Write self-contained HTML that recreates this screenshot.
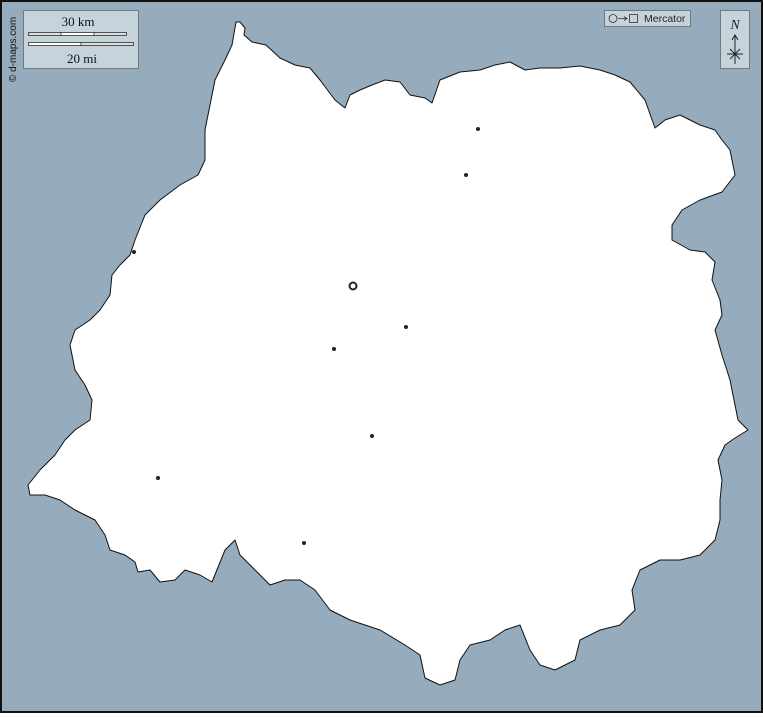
<!DOCTYPE html>
<html><head><meta charset="utf-8"><style>
html,body{margin:0;padding:0;}
body{width:763px;height:713px;overflow:hidden;}
</style></head><body>
<svg width="763" height="713" xmlns="http://www.w3.org/2000/svg">
<rect x="0" y="0" width="763" height="713" fill="#96abbb"/>
<polygon fill="#ffffff" stroke="#111" stroke-width="1" stroke-linejoin="round" points="236,22 240,22 245,28 244,35 252,42 266,45 280,58 295,65 310,68 320,80 335,100 345,108 350,95 360,90 372,85 385,80 400,82 410,95 425,98 432,103 440,80 460,72 480,70 495,65 510,62 525,70 540,68 560,68 580,66 600,70 615,75 630,82 645,100 655,128 665,120 680,115 700,125 715,130 722,140 730,150 735,175 722,192 700,200 682,210 672,225 672,240 690,250 705,252 715,262 712,280 720,300 722,315 715,330 722,355 730,380 735,405 738,420 748,430 735,438 725,445 718,460 722,480 720,500 720,520 715,540 700,555 680,560 660,560 640,570 632,590 635,610 620,625 600,630 580,640 575,660 555,670 540,665 530,650 520,625 505,630 490,640 470,645 460,660 455,680 440,685 425,678 420,655 405,645 380,630 350,620 330,610 315,590 300,580 285,580 270,585 255,570 240,555 235,540 225,550 212,582 200,575 185,570 175,580 160,582 150,570 138,572 135,562 125,555 110,550 105,535 95,520 75,510 60,500 45,495 30,495 28,485 40,470 55,455 65,440 75,430 90,420 92,400 85,385 75,370 70,345 75,330 90,320 100,310 110,295 112,275 120,265 130,255 135,240 145,215 160,200 180,185 198,175 205,160 205,130 210,105 215,80 225,60 232,45"/>
<g fill="#222">
<circle cx="478" cy="129" r="2"/><circle cx="466" cy="175" r="2"/><circle cx="134" cy="252" r="2"/>
<circle cx="406" cy="327" r="2"/><circle cx="334" cy="349" r="2"/><circle cx="372" cy="436" r="2"/>
<circle cx="158" cy="478" r="2"/><circle cx="304" cy="543" r="2"/>
</g>
<circle cx="353" cy="286" r="3.5" fill="none" stroke="#222" stroke-width="2"/>
<rect x="1" y="1" width="761" height="711" fill="none" stroke="#111" stroke-width="2"/>
<rect x="23.5" y="10.5" width="115" height="58" fill="#c5d4dc" stroke="#777"/>
<text x="78" y="26" font-family="Liberation Serif" font-size="13" text-anchor="middle" fill="#111">30 km</text>
<rect x="28.5" y="32.5" width="98" height="3" fill="#ddd" stroke="#333" stroke-width="0.8"/>
<rect x="61" y="33" width="33" height="2" fill="#fff"/>
<line x1="61" y1="32" x2="61" y2="36" stroke="#333" stroke-width="0.8"/><line x1="94" y1="32" x2="94" y2="36" stroke="#333" stroke-width="0.8"/>
<rect x="28.5" y="42.5" width="105" height="3" fill="#ddd" stroke="#333" stroke-width="0.8"/>
<rect x="29" y="43" width="52" height="2" fill="#fff"/>
<line x1="81" y1="42" x2="81" y2="46" stroke="#333" stroke-width="0.8"/>
<text x="82" y="63" font-family="Liberation Serif" font-size="13" text-anchor="middle" fill="#111">20 mi</text>
<text transform="translate(16,82) rotate(-90)" font-family="Liberation Sans" font-size="10" fill="#111">© d-maps.com</text>
<rect x="604.5" y="10.5" width="86" height="16" fill="#c5d4dc" stroke="#777"/>
<circle cx="613" cy="18.5" r="4" fill="none" stroke="#333" stroke-width="0.8"/>
<path d="M618,18.5 H627 M624,16.5 L627,18.5 L624,20.5" stroke="#333" stroke-width="0.8" fill="none"/>
<rect x="629.5" y="14.5" width="8" height="8" fill="none" stroke="#333" stroke-width="0.8"/>
<text x="644" y="22" font-family="Liberation Sans" font-size="10.5" fill="#222">Mercator</text>
<rect x="720.5" y="10.5" width="29" height="58" fill="#c5d4dc" stroke="#777"/>
<text x="735" y="29" font-family="Liberation Serif" font-style="italic" font-size="14" text-anchor="middle" fill="#222">N</text>
<g stroke="#222" stroke-width="1" fill="none">
<line x1="735" y1="36" x2="735" y2="64"/><path d="M732,40 L735,35 L738,40"/>
<line x1="727" y1="54" x2="743" y2="54"/><line x1="730" y1="49" x2="740" y2="59"/><line x1="740" y1="49" x2="730" y2="59"/>
</g>
</svg>
</body></html>
